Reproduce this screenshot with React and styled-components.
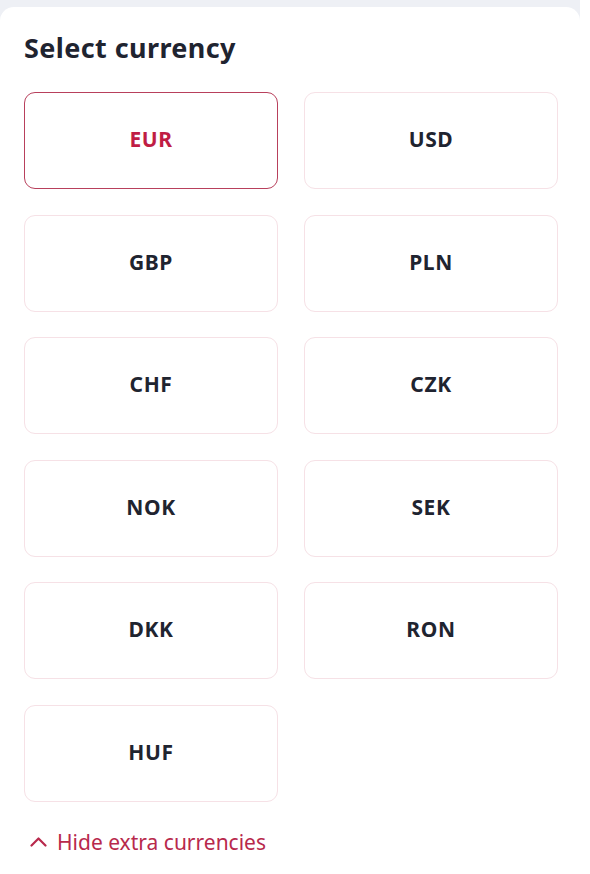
import React from "react";
import styled, { createGlobalStyle } from "styled-components";

const Global = createGlobalStyle`
  html, body { margin: 0; padding: 0; background: #ffffff; }
  body { font-family: "Noto Sans", "Open Sans", sans-serif; }
  * { box-sizing: border-box; }
`;

const Frame = styled.div`
  width: 580px;
  min-height: 874px;
  background: #eef0f5;
  padding-top: 7px;
`;

const Card = styled.div`
  width: 580px;
  min-height: 867px;
  background: #ffffff;
  border-radius: 14px 14px 0 0;
  padding: 24px 23px 0 24px;
`;

const Title = styled.h2`
  margin: 0;
  font-size: 27px;
  line-height: 34px;
  font-weight: 700;
  color: #1f2430;
  letter-spacing: 0.4px;
`;

const Grid = styled.div`
  display: grid;
  grid-template-columns: 254px 254px;
  column-gap: 26px;
  row-gap: 25.6px;
  margin-top: 27px;
`;

const Option = styled.button`
  height: 97px;
  border-radius: 11px;
  background: #ffffff;
  border: ${(p) => (p.$selected ? "1.5px solid #b8405c" : "1.5px solid #f6e1e6")};
  color: ${(p) => (p.$selected ? "#c01d44" : "#1f2430")};
  font-family: "Noto Sans", "Open Sans", sans-serif;
  font-size: 21px;
  font-weight: 700;
  letter-spacing: 0.6px;
  display: flex;
  align-items: center;
  justify-content: center;
  cursor: pointer;
  padding: 0 0 3px 0;
`;

const Toggle = styled.button`
  display: flex;
  align-items: center;
  gap: 10px;
  background: none;
  border: none;
  padding: 0 0 0 6px;
  margin-top: 26px;
  color: #b8294c;
  font-family: "Noto Sans", "Open Sans", sans-serif;
  font-size: 21px;
  font-weight: 400;
  cursor: pointer;
`;

const currencies = ["EUR", "USD", "GBP", "PLN", "CHF", "CZK", "NOK", "SEK", "DKK", "RON", "HUF"];

export default function App() {
  return (
    <Frame>
      <Global />
      <Card>
        <Title>Select currency</Title>
        <Grid>
          {currencies.map((c) => (
            <Option key={c} $selected={c === "EUR"}>{c}</Option>
          ))}
        </Grid>
        <Toggle>
          <svg width="17" height="11" viewBox="0 0 17 11" fill="none">
            <path d="M1.5 9.5L8.5 2.5L15.5 9.5" stroke="#b8294c" strokeWidth="2.2" strokeLinecap="round" strokeLinejoin="round" />
          </svg>
          Hide extra currencies
        </Toggle>
      </Card>
    </Frame>
  );
}
